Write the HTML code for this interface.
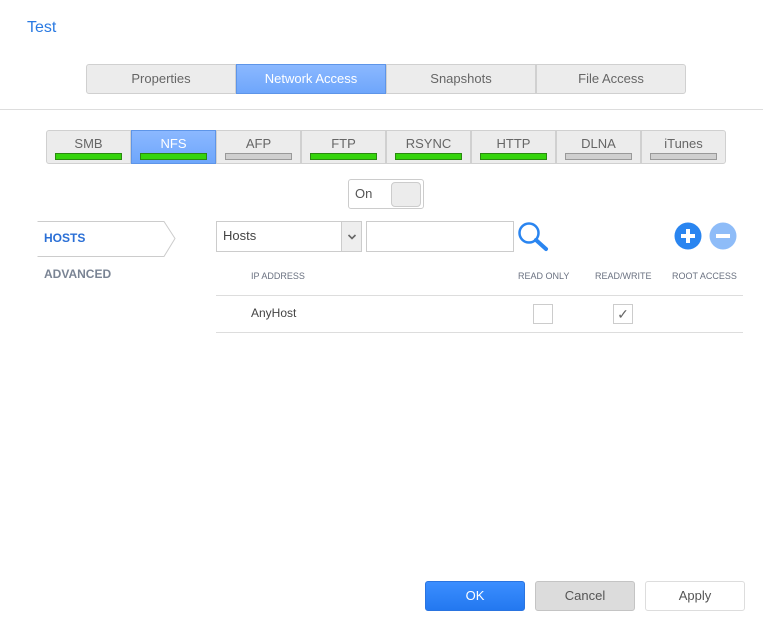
<!DOCTYPE html><html><head><style>
*{box-sizing:border-box;margin:0;padding:0}
body{width:763px;height:629px;background:#fff;font-family:"Liberation Sans",sans-serif;position:relative;overflow:hidden;color:#555}
.a{position:absolute}
.tab{position:absolute;top:64px;height:30px;width:150px;background:#ececec;border:1px solid #d0d0d0;font-size:13px;color:#666;text-align:center;line-height:28px}
.tab.on{background:linear-gradient(#8bb8ff,#6ea6fb);color:#fff;border-color:#5e95e8}
.pt{position:absolute;top:130px;height:34px;width:85px;background:#ececec;border:1px solid #d0d0d0;font-size:13px;color:#666;text-align:center;line-height:25px}
.pt.on{background:linear-gradient(#8bb8ff,#6ea6fb);color:#fff;border-color:#5e95e8}
.pt i{position:absolute;left:8px;right:8px;top:22px;height:7px;background:#35d40c;border:1px solid #2a8a10}
.pt i.g{background:#cfcfcf;border-color:#999}
.hd{position:absolute;top:271px;font-size:9px;color:#6a7180}
.btn{position:absolute;top:581px;width:100px;height:30px;border-radius:3px;font-size:13px;text-align:center;line-height:28px}
</style></head><body>
<div class="a" style="left:27px;top:19px;font-size:16px;color:#2a7ae2">Test</div>
<div class="tab" style="left:86px;border-radius:3px 0 0 3px">Properties</div>
<div class="tab on" style="left:236px">Network Access</div>
<div class="tab" style="left:386px">Snapshots</div>
<div class="tab" style="left:536px;border-radius:0 3px 3px 0">File Access</div>
<div class="a" style="left:0;top:109px;width:763px;height:1px;background:#ddd"></div>
<div class="pt" style="left:46px;border-radius:3px 0 0 3px">SMB<i></i></div>
<div class="pt on" style="left:131px">NFS<i></i></div>
<div class="pt" style="left:216px">AFP<i class="g"></i></div>
<div class="pt" style="left:301px">FTP<i></i></div>
<div class="pt" style="left:386px">RSYNC<i></i></div>
<div class="pt" style="left:471px">HTTP<i></i></div>
<div class="pt" style="left:556px">DLNA<i class="g"></i></div>
<div class="pt" style="left:641px;border-radius:0 3px 3px 0">iTunes<i class="g"></i></div>
<div class="a" style="left:348px;top:179px;width:76px;height:30px;border:1px solid #ccc;border-radius:3px;font-size:13px;line-height:28px;padding-left:6px;color:#555">On<div class="a" style="left:42px;top:2px;width:30px;height:25px;background:#ececec;border:1px solid #ccc;border-radius:4px"></div></div>
<svg class="a" style="left:37px;top:221px" width="140" height="36"><path d="M0.5 0.5H127L138 17.5L127 35.5H0.5" fill="#fff" stroke="#ccc"/></svg>
<div class="a" style="left:44px;top:231px;font-size:12px;font-weight:bold;color:#2a6fd6">HOSTS</div>
<div class="a" style="left:44px;top:267px;font-size:12px;font-weight:bold;color:#7a8494">ADVANCED</div>
<div class="a" style="left:216px;top:221px;width:146px;height:31px;border:1px solid #ccc;font-size:13px;line-height:28px;padding-left:6px;color:#444">Hosts<div class="a" style="left:124px;top:0;width:20px;height:29px;background:#eee;border-left:1px solid #ccc"><svg width="20" height="29"><path d="M6.5 13L10 16.5L13.5 13" fill="none" stroke="#666" stroke-width="1.6"/></svg></div></div>
<div class="a" style="left:366px;top:221px;width:148px;height:31px;border:1px solid #ccc"></div>
<svg class="a" style="left:516px;top:220px" width="34" height="32"><circle cx="13" cy="13" r="9.5" fill="none" stroke="#2a85f0" stroke-width="2.5"/><path d="M20 20L30 29" stroke="#2a85f0" stroke-width="4" stroke-linecap="round"/></svg>
<svg class="a" style="left:674px;top:222px" width="64" height="28"><circle cx="14" cy="14" r="13.5" fill="#2a85f0"/><path d="M14 7V21M7 14H21" stroke="#fff" stroke-width="4"/><circle cx="49" cy="14" r="13.5" fill="#8ebcf8"/><path d="M42 14H56" stroke="#fff" stroke-width="4"/></svg>
<div class="hd" style="left:251px">IP ADDRESS</div>
<div class="hd" style="left:518px">READ ONLY</div>
<div class="hd" style="left:595px">READ/WRITE</div>
<div class="hd" style="left:672px">ROOT ACCESS</div>
<div class="a" style="left:216px;top:295px;width:527px;height:1px;background:#ddd"></div>
<div class="a" style="left:251px;top:306px;font-size:12px;color:#444">AnyHost</div>
<div class="a" style="left:533px;top:304px;width:20px;height:20px;border:1px solid #ccc"></div>
<div class="a" style="left:613px;top:304px;width:20px;height:20px;border:1px solid #ccc;font-size:14px;color:#666;text-align:center;line-height:18px">&#10003;</div>
<div class="a" style="left:216px;top:332px;width:527px;height:1px;background:#ddd"></div>
<div class="btn" style="left:425px;background:linear-gradient(#3b8eff,#2378f0);color:#fff;border:1px solid #2a74e0">OK</div>
<div class="btn" style="left:535px;background:#dcdcdc;border:1px solid #c4c4c4;color:#555">Cancel</div>
<div class="btn" style="left:645px;background:#fff;border:1px solid #ddd;color:#555">Apply</div>
</body></html>
